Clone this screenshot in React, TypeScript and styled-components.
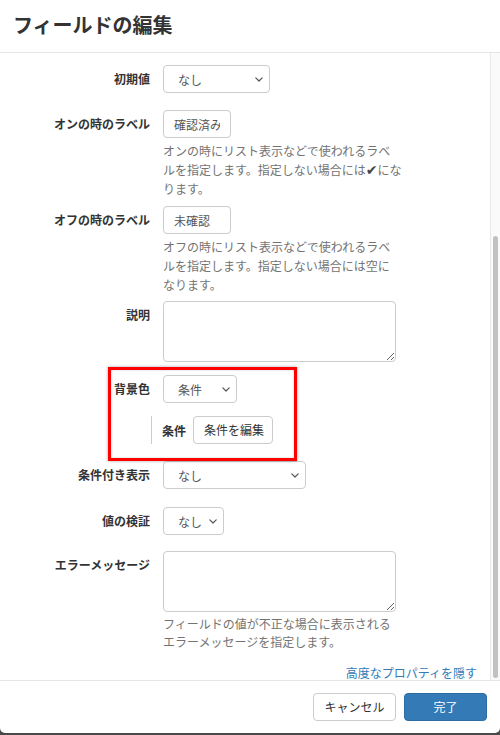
import React from "react";
import styled, { createGlobalStyle } from "styled-components";

const GlobalStyle = createGlobalStyle`
  html, body { margin: 0; padding: 0; }
  body {
    background: #4a4a4a;
    font-family: "Noto Sans CJK JP", "Noto Sans", "Liberation Sans", sans-serif;
    color: #333;
  }
  * { box-sizing: border-box; }
`;

const Modal = styled.div`
  width: 500px;
  height: 733px;
  background: #fff;
  border-radius: 0 0 5px 5px;
  display: flex;
  flex-direction: column;
  overflow: hidden;
`;

const Header = styled.div`
  height: 53px;
  flex: none;
  display: flex;
  align-items: center;
  padding: 0 13px 3px;
  border-bottom: 1px solid #e5e5e5;
`;

const Title = styled.h4`
  margin: 0;
  font-size: 20px;
  font-weight: bold;
  line-height: 1.1;
  color: #333;
`;

const Body = styled.div`
  flex: 1;
  min-height: 0;
  display: flex;
`;

const Content = styled.div`
  flex: 1;
  min-width: 0;
  overflow: hidden;
  padding: 12px 13px 0 0;
`;

const ScrollTrack = styled.div`
  width: 10px;
  flex: none;
  background: #fafafa;
  border-left: 1px solid #e8e8e8;
  display: flex;
  flex-direction: column;
  justify-content: flex-end;
  padding: 0 2px 2px 2px;
`;

const Thumb = styled.div<{ $h: number }>`
  height: ${(p) => p.$h}px;
  background: #c1c1c1;
  border-radius: 3px;
`;

const Group = styled.div<{ $mb?: number }>`
  display: grid;
  grid-template-columns: 150px 1fr;
  column-gap: 13px;
  margin-bottom: ${(p) => (p.$mb ?? 17)}px;
`;

const Label = styled.label`
  text-align: right;
  font-weight: bold;
  font-size: 12px;
  line-height: 28px;
  color: #333;
  white-space: nowrap;
`;

const Field = styled.div`
  display: flex;
  flex-direction: column;
  align-items: flex-start;
  min-width: 0;
`;

const Help = styled.p<{ $lh?: number }>`
  margin: 3px 0 0;
  width: 240px;
  font-size: 12px;
  line-height: ${(p) => p.$lh ?? 19}px;
  color: #737373;
  white-space: nowrap;
`;

const CheckMark = styled.span`
  font-family: "DejaVu Sans", sans-serif;
  font-size: 14px;
  line-height: 0;
  color: #444;
`;

const TextInput = styled.input<{ $w: number }>`
  width: ${(p) => p.$w}px;
  height: 28px;
  padding: 0 10px;
  border: 1px solid #ccc;
  border-radius: 4px;
  font: inherit;
  font-size: 12px;
  color: #555;
  background: #fff;
  outline: none;
`;

const TextArea = styled.textarea`
  display: block;
  width: 233px;
  height: 61px;
  padding: 6px 10px;
  border: 1px solid #ccc;
  border-radius: 4px;
  font: inherit;
  font-size: 12px;
  color: #555;
  outline: none;
`;

const SelectBox = styled.div<{ $w: number }>`
  width: ${(p) => p.$w}px;
  height: 28px;
  display: flex;
  align-items: center;
  justify-content: space-between;
  padding: 0 6px 0 14px;
  border: 1px solid #ccc;
  border-radius: 4px;
  background: #fff;
  font-size: 12px;
  color: #555;
  white-space: nowrap;
`;

const Button = styled.button<{ $w?: number; $primary?: boolean }>`
  height: 28px;
  ${(p) => (p.$w ? `width: ${p.$w}px;` : "")}
  padding: 0 10px;
  border: 1px solid ${(p) => (p.$primary ? "#2e6da4" : "#ccc")};
  border-radius: 4px;
  background: ${(p) => (p.$primary ? "#337ab7" : "#fff")};
  color: ${(p) => (p.$primary ? "#fff" : "#333")};
  font: inherit;
  font-size: 12px;
  line-height: 26px;
  white-space: nowrap;
  cursor: pointer;
`;

const Highlight = styled.div`
  position: relative;
`;

const RedFrame = styled.div`
  position: absolute;
  top: -8px;
  left: 108px;
  width: 189px;
  height: 94px;
  border: 3px solid #ff0000;
  box-shadow: 0 0 3px rgba(0, 0, 0, 0.35), inset 0 0 2px rgba(0, 0, 0, 0.25);
  pointer-events: none;
`;

const SubRow = styled.div<{ $mb?: number }>`
  display: flex;
  align-items: center;
  gap: 7px;
  margin: 13px 0 ${(p) => p.$mb ?? 17}px 151px;
  padding-left: 10px;
  border-left: 1px solid #ccc;
`;

const SubLabel = styled.span`
  font-weight: bold;
  font-size: 12px;
  color: #333;
`;

const LinkRow = styled.div`
  margin-top: 11px;
  text-align: right;
  line-height: 18px;
`;

const Link = styled.a`
  font-size: 12px;
  color: #337ab7;
  text-decoration: none;
  cursor: pointer;
`;

const Footer = styled.div`
  height: 53px;
  flex: none;
  display: flex;
  align-items: center;
  justify-content: flex-end;
  gap: 8px;
  padding: 0 13px;
  border-top: 1px solid #e5e5e5;
`;

const Chevron = () => (
  <svg width="8" height="5" viewBox="0 0 8 5" fill="none">
    <path d="M0.8 0.8 L4 4 L7.2 0.8" stroke="#555" strokeWidth="1.2" strokeLinecap="round" strokeLinejoin="round" />
  </svg>
);

const Select = ({ w, value }: { w: number; value: string }) => (
  <SelectBox $w={w}>
    <span>{value}</span>
    <Chevron />
  </SelectBox>
);

export default function App() {
  return (
    <>
      <GlobalStyle />
      <Modal>
        <Header>
          <Title>フィールドの編集</Title>
        </Header>
        <Body>
          <Content>
            <Group>
              <Label>初期値</Label>
              <Field>
                <Select w={107} value="なし" />
              </Field>
            </Group>
            <Group $mb={8}>
              <Label>オンの時のラベル</Label>
              <Field>
                <TextInput $w={68} defaultValue="確認済み" />
                <Help>
                  オンの時にリスト表示などで使われるラベ
                  <br />
                  ルを指定します。指定しない場合には<CheckMark>✔</CheckMark>にな
                  <br />
                  ります。
                </Help>
              </Field>
            </Group>
            <Group $mb={7}>
              <Label>オフの時のラベル</Label>
              <Field>
                <TextInput $w={68} defaultValue="未確認" />
                <Help>
                  オフの時にリスト表示などで使われるラベ
                  <br />
                  ルを指定します。指定しない場合には空に
                  <br />
                  なります。
                </Help>
              </Field>
            </Group>
            <Group $mb={13}>
              <Label>説明</Label>
              <Field>
                <TextArea />
              </Field>
            </Group>
            <Highlight>
              <Group $mb={0}>
                <Label>背景色</Label>
                <Field>
                  <Select w={74} value="条件" />
                </Field>
              </Group>
              <SubRow>
                <SubLabel>条件</SubLabel>
                <Button $w={80}>条件を編集</Button>
              </SubRow>
              <RedFrame />
            </Highlight>
            <Group $mb={18}>
              <Label>条件付き表示</Label>
              <Field>
                <Select w={143} value="なし" />
              </Field>
            </Group>
            <Group $mb={16}>
              <Label>値の検証</Label>
              <Field>
                <Select w={61} value="なし" />
              </Field>
            </Group>
            <Group $mb={0}>
              <Label>エラーメッセージ</Label>
              <Field>
                <TextArea />
                <Help $lh={18}>
                  フィールドの値が不正な場合に表示される
                  <br />
                  エラーメッセージを指定します。
                </Help>
              </Field>
            </Group>
            <LinkRow>
              <Link>高度なプロパティを隠す</Link>
            </LinkRow>
          </Content>
          <ScrollTrack>
            <Thumb $h={442} />
          </ScrollTrack>
        </Body>
        <Footer>
          <Button $w={83}>キャンセル</Button>
          <Button $w={83} $primary>
            完了
          </Button>
        </Footer>
      </Modal>
    </>
  );
}
